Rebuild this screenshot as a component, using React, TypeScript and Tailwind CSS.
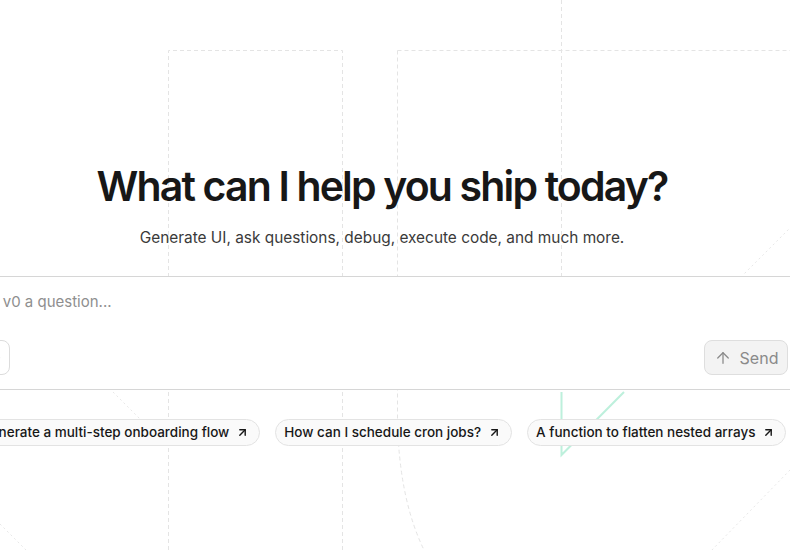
import { ArrowUp, ArrowUpRight, Paperclip } from 'lucide-react';

const suggestions: Array<string> = [
  'Generate a multi-step onboarding flow',
  'How can I schedule cron jobs?',
  'A function to flatten nested arrays',
];

function Backdrop() {
  return (
    <svg
      className="pointer-events-none absolute inset-0 h-full w-full"
      viewBox="0 0 790 550"
      fill="none"
      aria-hidden="true"
    >
      <g stroke="#e4e4e4" strokeWidth="1" strokeDasharray="4 3">
        <path d="M168.5 550 V50.5 H342.5 V550" />
        <path d="M397.5 50.5 H790" />
        <path d="M397.5 50.5 V420 Q399 500 425 552" />
        <path d="M561.5 0 V392" />
      </g>
      <g stroke="#e8e8e8" strokeWidth="1" strokeDasharray="2 3">
        <path d="M113 392 L140 419" />
        <path d="M0 524 L27 551" />
        <path d="M792 226 L744 274" />
        <path d="M790 470 L710 552" />
      </g>
      <path d="M561.5 392 V455 L624 392" stroke="#bdf0dc" strokeWidth="2" />
    </svg>
  );
}

export default function App() {
  return (
    <div
      className="relative h-[550px] w-[790px] overflow-hidden bg-white"
      style={{ fontFamily: 'Inter, "Noto Sans", sans-serif' }}
    >
      <Backdrop />
      <div className="relative ml-[-48px] flex w-[860px] flex-col items-center pt-[160px]">
        <h1 className="text-[41px] font-semibold leading-[52px] tracking-[-0.045em] text-[#171717]">
          What can I help you ship today?
        </h1>
        <p className="mt-[14px] text-[15.4px] leading-[24px] text-[#3a3a3a]">
          Generate UI, ask questions, debug, execute code, and much more.
        </p>

        <div className="mt-[26px] flex w-[838px] flex-col border border-[#d6d6d6] bg-white px-[12px] pb-[14px] pt-[14px]">
          <div className="ml-[-4px] h-[22px] text-[15px] leading-[22px] text-[#8f8f8f]">
            Ask v0 a question...
          </div>
          <div className="mt-[27px] flex items-center justify-between">
            <button
              type="button"
              className="flex h-[35px] w-[34px] items-center justify-center rounded-lg border border-[#dcdcdc] bg-white text-[#8a8a8a]"
            >
              <Paperclip size={16} />
            </button>
            <button
              type="button"
              className="flex h-[35px] w-[84px] items-center justify-center gap-[8px] rounded-lg border border-[#dedede] bg-[#f3f3f3] text-[16px] text-[#8a8a8a]"
            >
              <ArrowUp size={18} strokeWidth={1.7} />
              Send
            </button>
          </div>
        </div>

        <div className="mt-[29px] ml-[-6px] flex items-center gap-[15px]">
          {suggestions.map((label) => (
            <button
              key={label}
              type="button"
              className="flex h-[27px] items-center gap-[7px] rounded-full border border-[#e3e3e3] bg-[#fafafa] pl-[8px] pr-[10px] text-[13.5px] font-[450] text-[#171717]"
            >
              {label}
              <ArrowUpRight size={13} strokeWidth={2.6} />
            </button>
          ))}
        </div>
      </div>
    </div>
  );
}
